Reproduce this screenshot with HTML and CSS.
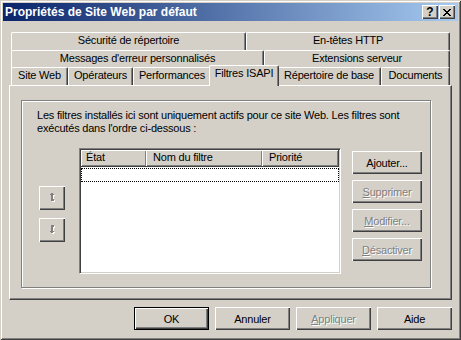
FILE: index.html
```html
<!DOCTYPE html>
<html lang="fr">
<head>
    <meta charset="UTF-8">
    <title>Propriétés de Site Web par défaut</title>
    <link rel="stylesheet" href="styles.css">
</head>
<body>
    <div class="window">
        <div class="titlebar">
            <span class="title">Propriétés de Site Web par défaut</span>
            <div class="caption-buttons">
                <span class="caption-btn help">?</span>
                <span class="caption-btn close">
                    <svg width="8" height="7" viewBox="0 0 8 7" shape-rendering="crispEdges">
                        <path d="M0 0h2v1h1v1h2v-1h1v-1h2v1h-1v1h-1v1h-1v1h1v1h1v1h1v1h-2v-1h-1v-1h-2v1h-1v1h-2v-1h1v-1h1v-1h1v-1h-1v-1h-1v-1h-1z" fill="#000"/>
                    </svg>
                </span>
            </div>
        </div>

        <div class="dialog">
            <div class="tabs">
                <div class="tab-row row-1">
                    <div class="tab tab-securite">Sécurité de répertoire</div>
                    <div class="tab tab-entetes">En-têtes HTTP</div>
                </div>
                <div class="tab-row row-2">
                    <div class="tab tab-messages">Messages d'erreur personnalisés</div>
                    <div class="tab tab-extensions">Extensions serveur</div>
                </div>
                <div class="tab-row row-3">
                    <div class="tab tab-site">Site Web</div>
                    <div class="tab tab-operateurs">Opérateurs</div>
                    <div class="tab tab-performances">Performances</div>
                    <div class="tab tab-filtres selected">Filtres ISAPI</div>
                    <div class="tab tab-repertoire">Répertoire de base</div>
                    <div class="tab tab-documents">Documents</div>
                </div>
            </div>

            <div class="panel">
                <div class="group">
                    <p class="intro">Les filtres installés ici sont uniquement actifs pour ce site Web. Les filtres sont exécutés dans l'ordre ci-dessous :</p>

                    <div class="filters">
                        <div class="order-buttons">
                            <span class="btn order-btn">
                                <svg width="8" height="10" viewBox="0 0 8 10" shape-rendering="crispEdges">
                                    <g fill="#fff" transform="translate(1,1)">
                                        <rect x="3" y="0" width="2" height="1"/><rect x="2" y="1" width="4" height="1"/><rect x="3" y="2" width="2" height="6"/><rect x="5" y="6" width="1" height="2"/>
                                    </g>
                                    <g fill="#808080">
                                        <rect x="3" y="0" width="2" height="1"/><rect x="2" y="1" width="4" height="1"/><rect x="3" y="2" width="2" height="6"/><rect x="5" y="6" width="1" height="2"/>
                                    </g>
                                </svg>
                            </span>
                            <span class="btn order-btn">
                                <svg width="8" height="10" viewBox="0 0 8 10" shape-rendering="crispEdges">
                                    <g fill="#fff" transform="translate(1,1)">
                                        <rect x="5" y="0" width="1" height="2"/><rect x="3" y="0" width="2" height="6"/><rect x="2" y="6" width="4" height="1"/><rect x="3" y="7" width="2" height="1"/>
                                    </g>
                                    <g fill="#808080">
                                        <rect x="5" y="0" width="1" height="2"/><rect x="3" y="0" width="2" height="6"/><rect x="2" y="6" width="4" height="1"/><rect x="3" y="7" width="2" height="1"/>
                                    </g>
                                </svg>
                            </span>
                        </div>

                        <div class="listview">
                            <div class="list-header">
                                <span class="col col-etat">État</span>
                                <span class="col col-nom">Nom du filtre</span>
                                <span class="col col-priorite">Priorité</span>
                            </div>
                            <div class="focus-row"></div>
                        </div>

                        <div class="side-buttons">
                            <span class="btn side-btn">A<u>j</u>outer...</span>
                            <span class="btn side-btn disabled"><u>S</u>upprimer</span>
                            <span class="btn side-btn disabled"><u>M</u>odifier...</span>
                            <span class="btn side-btn disabled"><u>D</u>ésactiver</span>
                        </div>
                    </div>
                </div>
            </div>

            <div class="footer">
                <span class="btn footer-btn default">OK</span>
                <span class="btn footer-btn">Annuler</span>
                <span class="btn footer-btn disabled"><u>A</u>ppliquer</span>
                <span class="btn footer-btn">Aide</span>
            </div>
        </div>
    </div>
</body>
</html>
```

FILE: styles.css
```css
* {
    box-sizing: border-box;
}

html, body {
    margin: 0;
    padding: 0;
}

body {
    font-family: "Liberation Sans", Arial, sans-serif;
    font-size: 11px;
    letter-spacing: -0.2px;
    color: #000;
    background-color: #d4d0c8;
}

.window {
    width: 461px;
    height: 340px;
    padding: 3px;
    background-color: #d4d0c8;
    box-shadow: inset 1px 1px #d4d0c8, inset -1px -1px #404040, inset 2px 2px #fff, inset -2px -2px #808080;
}

/* title bar */
.titlebar {
    height: 18px;
    display: flex;
    align-items: center;
    justify-content: space-between;
    padding: 0 3px 0 2px;
    background: linear-gradient(to right, #0a246a, #a6caf0);
}

.title {
    color: #fff;
    font-weight: bold;
    font-size: 12px;
    letter-spacing: 0;
}

.caption-buttons {
    display: flex;
    gap: 1px;
}

.caption-btn {
    width: 16px;
    height: 14px;
    display: flex;
    align-items: center;
    justify-content: center;
    background-color: #d4d0c8;
    box-shadow: inset 1px 1px #fff, inset -1px -1px #404040, inset -2px -2px #808080;
    font-weight: bold;
    font-size: 12px;
    line-height: 14px;
    letter-spacing: 0;
}

.caption-btn.help {
    padding-bottom: 1px;
}

/* dialog */
.dialog {
    padding: 11px 6px 0;
}

.tabs {
    padding: 0 2px;
}

.tab-row {
    display: flex;
}

.row-1 { height: 18px; }
.row-2 { height: 17px; }
.row-3 { height: 18px; }

.tab {
    height: 100%;
    text-align: center;
    white-space: nowrap;
    padding-top: 1px;
    line-height: 13px;
    background-color: #d4d0c8;
    border-top: 1px solid #fff;
    border-left: 1px solid #fff;
    border-right: 1px solid #404040;
    border-radius: 2px 2px 0 0;
    box-shadow: inset -1px 0 #808080;
}

.row-2 .tab {
    height: 18px;
}

.tab-securite { width: 235px; }
.tab-entetes { width: 204px; }
.tab-messages { width: 253px; }
.tab-extensions { width: 186px; }
.tab-site { width: 57px; }
.tab-operateurs { width: 65px; }
.tab-performances { width: 78px; }
.tab-filtres { width: 66px; }
.tab-repertoire { width: 104px; }
.tab-documents { width: 69px; }

.tab.selected {
    position: relative;
    z-index: 2;
    width: 70px;
    height: 21px;
    margin: -2px -2px 0;
    padding-top: 1px;
}

/* tab page */
.panel {
    height: 215px;
    padding: 14px 0 0 11px;
    background-color: #d4d0c8;
    border-top: 1px solid #fff;
    border-left: 1px solid #fff;
    border-right: 1px solid #404040;
    border-bottom: 1px solid #404040;
    box-shadow: inset -1px -1px #808080;
}

.group {
    width: 410px;
    height: 188px;
    border: 1px solid #808080;
    box-shadow: inset 1px 1px #fff, 1px 1px #fff;
}

.intro {
    width: 385px;
    margin: 8px 0 0 15px;
    line-height: 13px;
}

.filters {
    display: flex;
    margin-top: 13px;
    padding-left: 17px;
}

.order-buttons {
    display: flex;
    flex-direction: column;
    gap: 8px;
    margin-top: 38px;
}

.btn {
    display: flex;
    align-items: center;
    justify-content: center;
    background-color: #d4d0c8;
    box-shadow: inset 1px 1px #fff, inset -1px -1px #404040, inset -2px -2px #808080;
    white-space: nowrap;
}

.btn.disabled {
    color: #808080;
    text-shadow: 1px 1px #fff;
}

.order-btn {
    width: 26px;
    height: 24px;
}

/* list */
.listview {
    width: 262px;
    height: 126px;
    margin-left: 14px;
    background-color: #fff;
    border: 1px solid;
    border-color: #808080 #fff #fff #808080;
    box-shadow: inset 1px 1px #404040, inset -1px -1px #d4d0c8;
    padding: 1px;
}

.list-header {
    display: flex;
    height: 17px;
    border-bottom: 1px solid #404040;
}

.col {
    height: 16px;
    padding-left: 6px;
    line-height: 15px;
    background-color: #d4d0c8;
    box-shadow: inset 1px 1px #fff, inset -1px -1px #808080;
    white-space: nowrap;
}

.col-etat { width: 65px; padding-left: 5px; }
.col-nom { width: 116px; padding-left: 7px; }
.col-priorite {
    width: 77px;
    padding-left: 7px;
    border-right: 1px solid #404040;
}

.focus-row {
    height: 14px;
    margin-top: 1px;
    border: 1px dotted #000;
}

.side-buttons {
    display: flex;
    flex-direction: column;
    gap: 6px;
    margin: 3px 0 0 11px;
}

.side-btn {
    width: 70px;
    height: 23px;
}

/* bottom buttons */
.footer {
    display: flex;
    justify-content: flex-end;
    gap: 6px;
    margin-top: 7px;
}

.footer-btn {
    width: 75px;
    height: 23px;
}

.footer-btn.default {
    border: 1px solid #000;
}
```
